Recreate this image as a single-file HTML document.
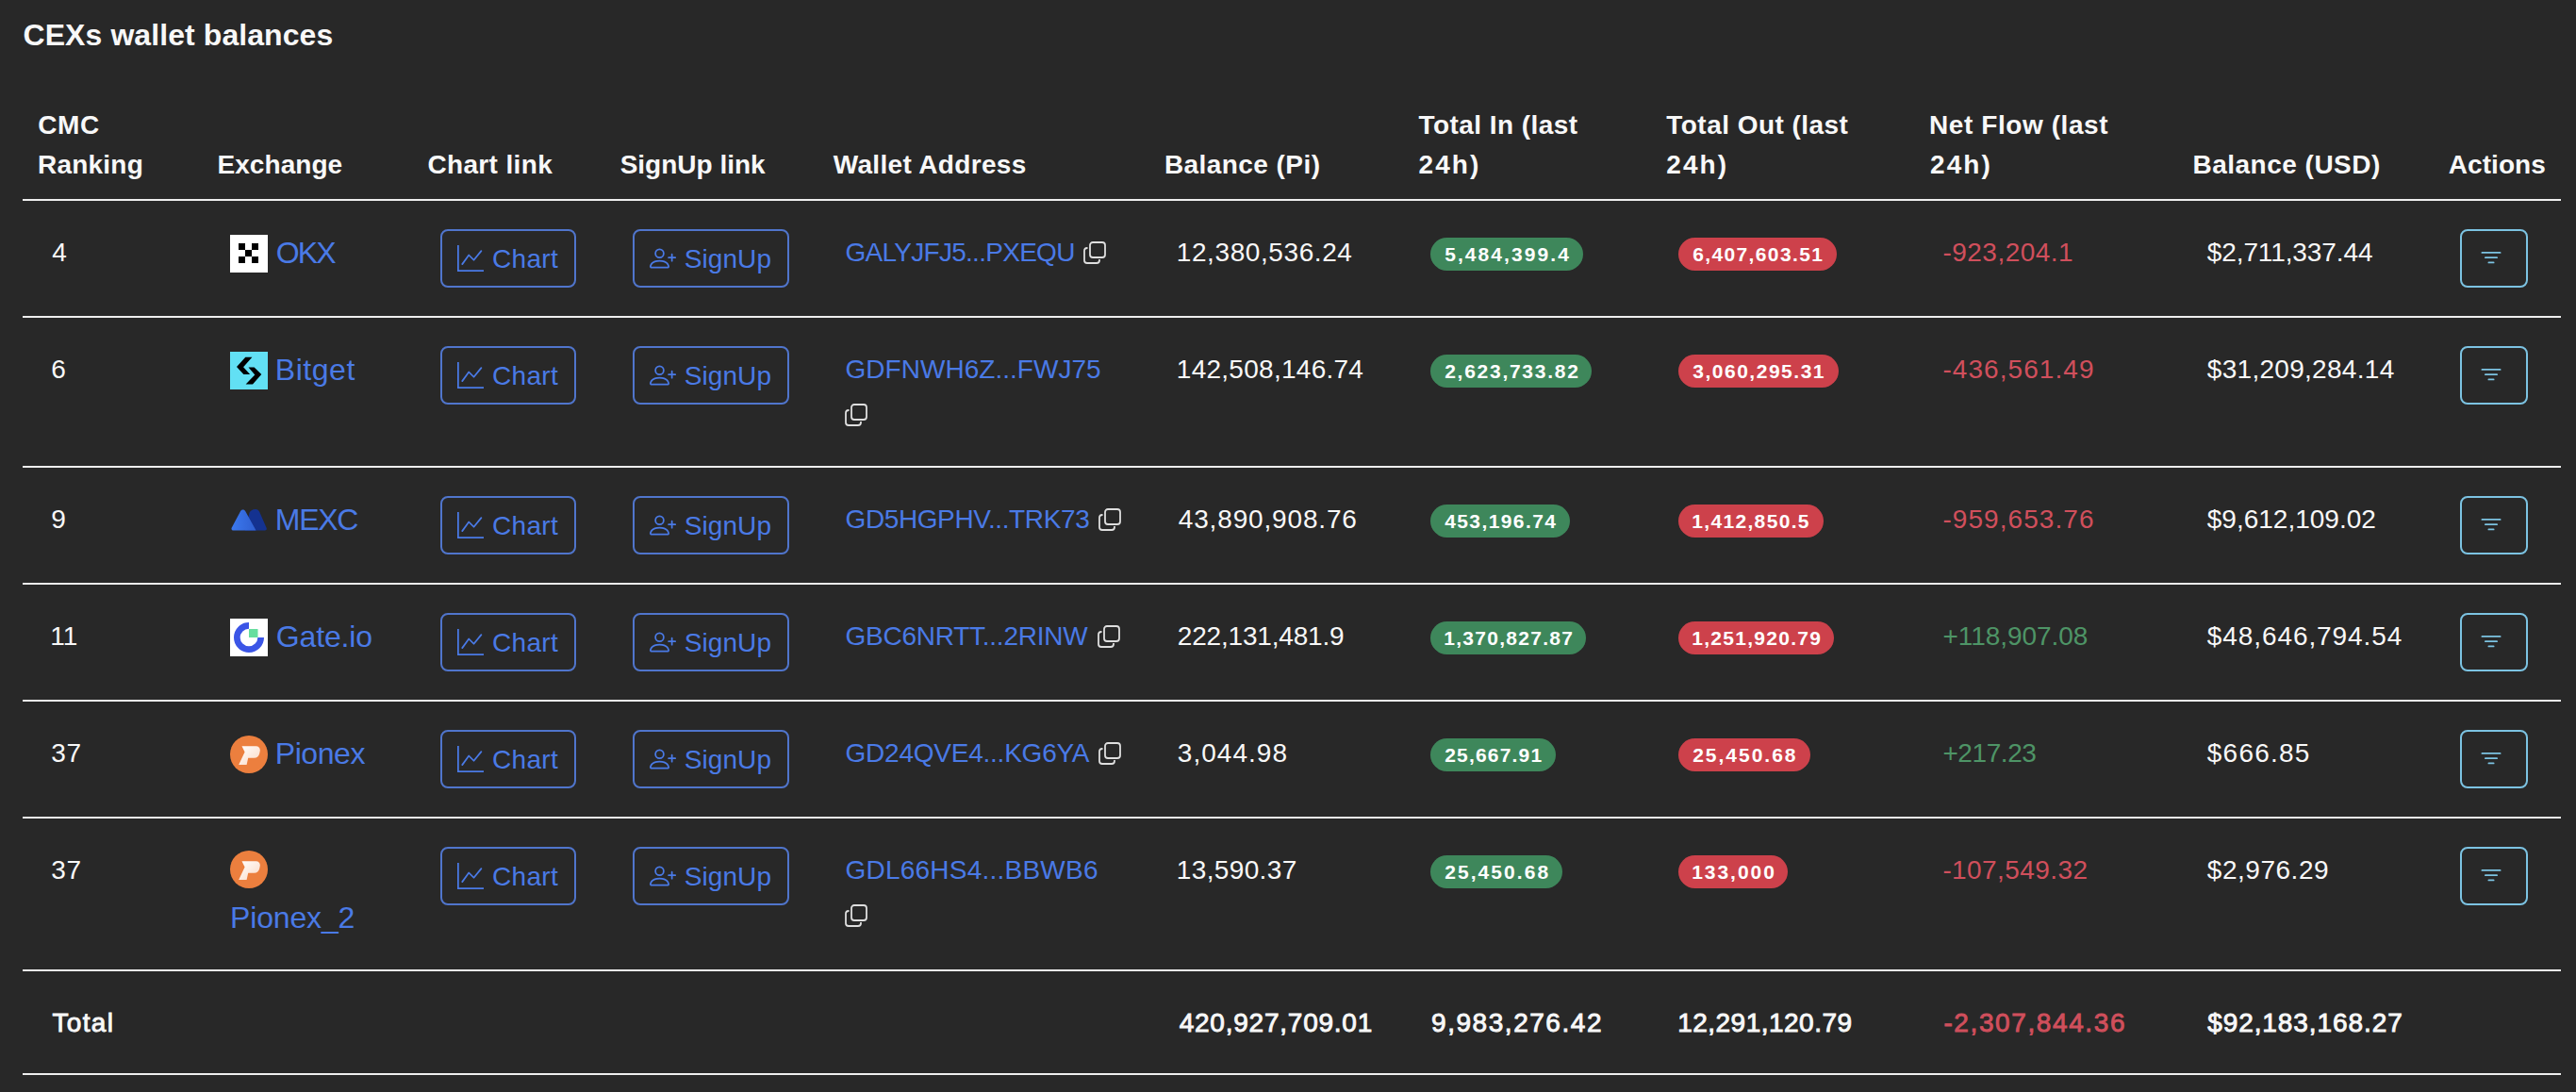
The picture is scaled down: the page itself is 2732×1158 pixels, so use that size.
<!DOCTYPE html>
<html><head><meta charset="utf-8"><title>CEXs wallet balances</title>
<style>
html,body{margin:0;padding:0;background:#282828;width:2732px;height:1158px;overflow:hidden}
body{position:relative;font-family:"Liberation Sans",sans-serif}
.t{position:absolute;white-space:nowrap;z-index:2}
.ab,.ic{position:absolute;line-height:0}
.ic{z-index:3}
.ln{position:absolute;left:24px;width:2692px;height:2px;background:#eeeeee}
.btn{position:absolute;height:62px;border:2px solid #5075cc;border-radius:8px;box-sizing:border-box}
.btn.info{border-color:#7cc3e2}
.bdg{position:absolute;height:35px;border-radius:17.5px;z-index:1}
</style></head><body>
<div class="ln" style="top:211px"></div>
<div class="ln" style="top:335px"></div>
<div class="ln" style="top:494px"></div>
<div class="ln" style="top:618px"></div>
<div class="ln" style="top:742px"></div>
<div class="ln" style="top:866px"></div>
<div class="ln" style="top:1028px"></div>
<div class="ln" style="top:1138px"></div>
<div class="t" style="left:24.5px;top:21px;font-size:32px;line-height:32px;color:#f8f8f8;font-weight:700;letter-spacing:0.08px">CEXs wallet balances</div>
<div class="t" style="left:40.2px;top:119px;font-size:28px;line-height:28px;color:#f8f8f8;font-weight:700;letter-spacing:0.63px">CMC</div>
<div class="t" style="left:40px;top:161px;font-size:28px;line-height:28px;color:#f8f8f8;font-weight:700;letter-spacing:0.22px">Ranking</div>
<div class="t" style="left:230.5px;top:161px;font-size:28px;line-height:28px;color:#f8f8f8;font-weight:700;letter-spacing:0.06px">Exchange</div>
<div class="t" style="left:453.4px;top:161px;font-size:28px;line-height:28px;color:#f8f8f8;font-weight:700;letter-spacing:0.36px">Chart link</div>
<div class="t" style="left:657.7px;top:161px;font-size:28px;line-height:28px;color:#f8f8f8;font-weight:700;letter-spacing:-0.01px">SignUp link</div>
<div class="t" style="left:883.7px;top:161px;font-size:28px;line-height:28px;color:#f8f8f8;font-weight:700;letter-spacing:0.34px">Wallet Address</div>
<div class="t" style="left:1234.9px;top:161px;font-size:28px;line-height:28px;color:#f8f8f8;font-weight:700;letter-spacing:0.44px">Balance (Pi)</div>
<div class="t" style="left:1504.5px;top:119px;font-size:28px;line-height:28px;color:#f8f8f8;font-weight:700;letter-spacing:0.45px">Total In (last</div>
<div class="t" style="left:1504.5px;top:161px;font-size:28px;line-height:28px;color:#f8f8f8;font-weight:700;letter-spacing:2.08px">24h)</div>
<div class="t" style="left:1767.3px;top:119px;font-size:28px;line-height:28px;color:#f8f8f8;font-weight:700;letter-spacing:0.46px">Total Out (last</div>
<div class="t" style="left:1767.3px;top:161px;font-size:28px;line-height:28px;color:#f8f8f8;font-weight:700;letter-spacing:2.08px">24h)</div>
<div class="t" style="left:2046px;top:119px;font-size:28px;line-height:28px;color:#f8f8f8;font-weight:700;letter-spacing:0.58px">Net Flow (last</div>
<div class="t" style="left:2047px;top:161px;font-size:28px;line-height:28px;color:#f8f8f8;font-weight:700;letter-spacing:2.08px">24h)</div>
<div class="t" style="left:2325.5px;top:161px;font-size:28px;line-height:28px;color:#f8f8f8;font-weight:700;letter-spacing:0.49px">Balance (USD)</div>
<div class="t" style="left:2596.7px;top:161px;font-size:28px;line-height:28px;color:#f8f8f8;font-weight:700;letter-spacing:0.08px">Actions</div>
<div class="t" style="left:55.3px;top:254px;font-size:28px;line-height:28px;color:#f8f8f8">4</div>
<div class="t" style="left:292.8px;top:251.7px;font-size:32px;line-height:32px;color:#4a7ae6;letter-spacing:-1.87px">OKX</div>
<div class="t" style="left:522px;top:260.8px;font-size:28px;line-height:28px;color:#4a7ae6;letter-spacing:0.33px">Chart</div>
<div class="t" style="left:725.7px;top:260.8px;font-size:28px;line-height:28px;color:#4a7ae6;letter-spacing:0.09px">SignUp</div>
<div class="t" style="left:896.5px;top:253.5px;font-size:28px;line-height:28px;color:#4a7ae6;letter-spacing:-0.72px">GALYJFJ5...PXEQU</div>
<div class="t" style="left:1247.8px;top:254px;font-size:28px;line-height:28px;color:#f8f8f8;letter-spacing:0.59px">12,380,536.24</div>
<div class="t" style="left:1532.2px;top:259.3px;font-size:21px;line-height:21px;color:#ffffff;font-weight:700;letter-spacing:2.07px">5,484,399.4</div>
<div class="t" style="left:1795.2px;top:259.3px;font-size:21px;line-height:21px;color:#ffffff;font-weight:700;letter-spacing:1.37px">6,407,603.51</div>
<div class="t" style="left:2060.4px;top:254.3px;font-size:28px;line-height:28px;color:#d04f5c;letter-spacing:0.49px">-923,204.1</div>
<div class="t" style="left:2340.8px;top:254.3px;font-size:28px;line-height:28px;color:#f8f8f8;letter-spacing:-0.11px">$2,711,337.44</div>
<div class="t" style="left:54.3px;top:378px;font-size:28px;line-height:28px;color:#f8f8f8">6</div>
<div class="t" style="left:291.8px;top:375.7px;font-size:32px;line-height:32px;color:#4a7ae6;letter-spacing:0.53px">Bitget</div>
<div class="t" style="left:522px;top:384.8px;font-size:28px;line-height:28px;color:#4a7ae6;letter-spacing:0.33px">Chart</div>
<div class="t" style="left:725.7px;top:384.8px;font-size:28px;line-height:28px;color:#4a7ae6;letter-spacing:0.09px">SignUp</div>
<div class="t" style="left:896.5px;top:377.5px;font-size:28px;line-height:28px;color:#4a7ae6;letter-spacing:0.03px">GDFNWH6Z...FWJ75</div>
<div class="t" style="left:1247.8px;top:378px;font-size:28px;line-height:28px;color:#f8f8f8;letter-spacing:0.27px">142,508,146.74</div>
<div class="t" style="left:1532.2px;top:383.3px;font-size:21px;line-height:21px;color:#ffffff;font-weight:700;letter-spacing:1.73px">2,623,733.82</div>
<div class="t" style="left:1795.2px;top:383.3px;font-size:21px;line-height:21px;color:#ffffff;font-weight:700;letter-spacing:1.52px">3,060,295.31</div>
<div class="t" style="left:2060.4px;top:378.3px;font-size:28px;line-height:28px;color:#d04f5c;letter-spacing:1.06px">-436,561.49</div>
<div class="t" style="left:2340.8px;top:378.3px;font-size:28px;line-height:28px;color:#f8f8f8;letter-spacing:0.29px">$31,209,284.14</div>
<div class="t" style="left:54.3px;top:537px;font-size:28px;line-height:28px;color:#f8f8f8">9</div>
<div class="t" style="left:291.8px;top:534.7px;font-size:32px;line-height:32px;color:#4a7ae6;letter-spacing:-1.28px">MEXC</div>
<div class="t" style="left:522px;top:543.8px;font-size:28px;line-height:28px;color:#4a7ae6;letter-spacing:0.33px">Chart</div>
<div class="t" style="left:725.7px;top:543.8px;font-size:28px;line-height:28px;color:#4a7ae6;letter-spacing:0.09px">SignUp</div>
<div class="t" style="left:896.5px;top:536.5px;font-size:28px;line-height:28px;color:#4a7ae6;letter-spacing:-0.39px">GD5HGPHV...TRK73</div>
<div class="t" style="left:1249.8px;top:537px;font-size:28px;line-height:28px;color:#f8f8f8;letter-spacing:0.84px">43,890,908.76</div>
<div class="t" style="left:1532.2px;top:542.3px;font-size:21px;line-height:21px;color:#ffffff;font-weight:700;letter-spacing:1.4px">453,196.74</div>
<div class="t" style="left:1794.2px;top:542.3px;font-size:21px;line-height:21px;color:#ffffff;font-weight:700;letter-spacing:1.34px">1,412,850.5</div>
<div class="t" style="left:2060.4px;top:537.3px;font-size:28px;line-height:28px;color:#d04f5c;letter-spacing:1.06px">-959,653.76</div>
<div class="t" style="left:2340.8px;top:537.3px;font-size:28px;line-height:28px;color:#f8f8f8">$9,612,109.02</div>
<div class="t" style="left:53.3px;top:661px;font-size:28px;line-height:28px;color:#f8f8f8">11</div>
<div class="t" style="left:292.8px;top:658.7px;font-size:32px;line-height:32px;color:#4a7ae6;letter-spacing:-0.15px">Gate.io</div>
<div class="t" style="left:522px;top:667.8px;font-size:28px;line-height:28px;color:#4a7ae6;letter-spacing:0.33px">Chart</div>
<div class="t" style="left:725.7px;top:667.8px;font-size:28px;line-height:28px;color:#4a7ae6;letter-spacing:0.09px">SignUp</div>
<div class="t" style="left:896.5px;top:660.5px;font-size:28px;line-height:28px;color:#4a7ae6;letter-spacing:-0.25px">GBC6NRTT...2RINW</div>
<div class="t" style="left:1248.8px;top:661px;font-size:28px;line-height:28px;color:#f8f8f8;letter-spacing:-0.19px">222,131,481.9</div>
<div class="t" style="left:1531.2px;top:666.3px;font-size:21px;line-height:21px;color:#ffffff;font-weight:700;letter-spacing:1.28px">1,370,827.87</div>
<div class="t" style="left:1794.2px;top:666.3px;font-size:21px;line-height:21px;color:#ffffff;font-weight:700;letter-spacing:1.28px">1,251,920.79</div>
<div class="t" style="left:2060.4px;top:661.3px;font-size:28px;line-height:28px;color:#4e9466;letter-spacing:-0.04px">+118,907.08</div>
<div class="t" style="left:2340.8px;top:661.3px;font-size:28px;line-height:28px;color:#f8f8f8;letter-spacing:0.91px">$48,646,794.54</div>
<div class="t" style="left:54.3px;top:785px;font-size:28px;line-height:28px;color:#f8f8f8;letter-spacing:0.63px">37</div>
<div class="t" style="left:291.8px;top:782.7px;font-size:32px;line-height:32px;color:#4a7ae6;letter-spacing:-0.45px">Pionex</div>
<div class="t" style="left:522px;top:791.8px;font-size:28px;line-height:28px;color:#4a7ae6;letter-spacing:0.33px">Chart</div>
<div class="t" style="left:725.7px;top:791.8px;font-size:28px;line-height:28px;color:#4a7ae6;letter-spacing:0.09px">SignUp</div>
<div class="t" style="left:896.5px;top:784.5px;font-size:28px;line-height:28px;color:#4a7ae6;letter-spacing:-0.23px">GD24QVE4...KG6YA</div>
<div class="t" style="left:1248.8px;top:785px;font-size:28px;line-height:28px;color:#f8f8f8;letter-spacing:1.03px">3,044.98</div>
<div class="t" style="left:1532.2px;top:790.3px;font-size:21px;line-height:21px;color:#ffffff;font-weight:700;letter-spacing:1.19px">25,667.91</div>
<div class="t" style="left:1795.2px;top:790.3px;font-size:21px;line-height:21px;color:#ffffff;font-weight:700;letter-spacing:1.99px">25,450.68</div>
<div class="t" style="left:2060.4px;top:785.3px;font-size:28px;line-height:28px;color:#4e9466;letter-spacing:-0.42px">+217.23</div>
<div class="t" style="left:2340.8px;top:785.3px;font-size:28px;line-height:28px;color:#f8f8f8;letter-spacing:1.23px">$666.85</div>
<div class="t" style="left:54.3px;top:909px;font-size:28px;line-height:28px;color:#f8f8f8;letter-spacing:0.63px">37</div>
<div class="t" style="left:244px;top:957.2px;font-size:32px;line-height:32px;color:#4a7ae6;letter-spacing:-0.16px">Pionex_2</div>
<div class="t" style="left:522px;top:915.8px;font-size:28px;line-height:28px;color:#4a7ae6;letter-spacing:0.33px">Chart</div>
<div class="t" style="left:725.7px;top:915.8px;font-size:28px;line-height:28px;color:#4a7ae6;letter-spacing:0.09px">SignUp</div>
<div class="t" style="left:896.5px;top:908.5px;font-size:28px;line-height:28px;color:#4a7ae6;letter-spacing:0.23px">GDL66HS4...BBWB6</div>
<div class="t" style="left:1247.8px;top:909px;font-size:28px;line-height:28px;color:#f8f8f8;letter-spacing:0.36px">13,590.37</div>
<div class="t" style="left:1532.2px;top:914.3px;font-size:21px;line-height:21px;color:#ffffff;font-weight:700;letter-spacing:2.07px">25,450.68</div>
<div class="t" style="left:1794.2px;top:914.3px;font-size:21px;line-height:21px;color:#ffffff;font-weight:700;letter-spacing:1.96px">133,000</div>
<div class="t" style="left:2060.4px;top:909.3px;font-size:28px;line-height:28px;color:#d04f5c;letter-spacing:0.41px">-107,549.32</div>
<div class="t" style="left:2340.8px;top:909.3px;font-size:28px;line-height:28px;color:#f8f8f8;letter-spacing:0.53px">$2,976.29</div>
<div class="t" style="left:55.55px;top:1071.3px;font-size:28px;line-height:28px;color:#f8f8f8;-webkit-text-stroke:0.9px #f8f8f8;letter-spacing:1.32px">Total</div>
<div class="t" style="left:1250.65px;top:1071.2px;font-size:28px;line-height:28px;color:#f8f8f8;-webkit-text-stroke:0.9px #f8f8f8;letter-spacing:0.77px">420,927,709.01</div>
<div class="t" style="left:1518.05px;top:1071.2px;font-size:28px;line-height:28px;color:#f8f8f8;-webkit-text-stroke:0.9px #f8f8f8;letter-spacing:1.54px">9,983,276.42</div>
<div class="t" style="left:1779.15px;top:1071.2px;font-size:28px;line-height:28px;color:#f8f8f8;-webkit-text-stroke:0.9px #f8f8f8;letter-spacing:0.49px">12,291,120.79</div>
<div class="t" style="left:2061.45px;top:1071.2px;font-size:28px;line-height:28px;color:#d04f5c;-webkit-text-stroke:0.9px #d04f5c;letter-spacing:1.6px">-2,307,844.36</div>
<div class="t" style="left:2341.15px;top:1071.2px;font-size:28px;line-height:28px;color:#f8f8f8;-webkit-text-stroke:0.9px #f8f8f8;letter-spacing:0.93px">$92,183,168.27</div>
<div class="ab" style="left:244px;top:249px;width:40px;height:40px"><svg width="40" height="40" viewBox="0 0 40 40"><rect width="40" height="40" fill="#fff"/><g fill="#000"><rect x="9" y="9" width="7" height="7"/><rect x="23" y="9" width="7" height="7"/><rect x="16" y="16" width="7" height="7"/><rect x="9" y="23" width="7" height="7"/><rect x="23" y="23" width="7" height="7"/></g></svg></div>
<div class="btn" style="left:467px;top:243px;width:144px"></div>
<div class="ic" style="left:485px;top:260px;color:#4a7ae6"><svg viewBox="0 0 16 16" width="28" height="28" fill="currentColor"><path fill-rule="evenodd" d="M0 0h1v15h15v1H0zm14.817 3.113a.5.5 0 0 1 .07.704l-4.5 5.5a.5.5 0 0 1-.74.037L7.06 6.767l-3.656 5.027a.5.5 0 0 1-.808-.588l4-5.5a.5.5 0 0 1 .758-.06l2.609 2.61 4.15-5.073a.5.5 0 0 1 .704-.07"/></svg></div>
<div class="btn" style="left:671px;top:243px;width:166px"></div>
<div class="ic" style="left:689px;top:260px;color:#4a7ae6"><svg viewBox="0 0 16 16" width="28" height="28" fill="currentColor"><path d="M6 8a3 3 0 1 0 0-6 3 3 0 0 0 0 6m2-3a2 2 0 1 1-4 0 2 2 0 0 1 4 0m4 8c0 1-1 1-1 1H1s-1 0-1-1 1-4 6-4 6 3 6 4m-1-.004c-.001-.246-.154-.986-.832-1.664C9.516 10.68 8.289 10 6 10s-3.516.68-4.168 1.332c-.678.678-.83 1.418-.832 1.664z"/><path fill-rule="evenodd" d="M13.5 5a.5.5 0 0 1 .5.5V7h1.5a.5.5 0 0 1 0 1H14v1.5a.5.5 0 0 1-1 0V8h-1.5a.5.5 0 0 1 0-1H13V5.5a.5.5 0 0 1 .5-.5"/></svg></div>
<div class="btn info" style="left:2609px;top:243px;width:72px"></div>
<div class="ic" style="left:2627.5px;top:260px;color:#7cc3e2"><svg viewBox="0 0 16 16" width="28" height="28" fill="currentColor"><path d="M6 10.5a.5.5 0 0 1 .5-.5h3a.5.5 0 0 1 0 1h-3a.5.5 0 0 1-.5-.5m-2-3a.5.5 0 0 1 .5-.5h7a.5.5 0 0 1 0 1h-7a.5.5 0 0 1-.5-.5m-2-3a.5.5 0 0 1 .5-.5h11a.5.5 0 0 1 0 1h-11a.5.5 0 0 1-.5-.5"/></svg></div>
<div class="ic" style="left:1148.6px;top:256px;color:#dedede"><svg viewBox="0 0 24 24" width="24" height="24" fill="none" stroke="currentColor" stroke-width="1.8"><rect x="7" y="1" width="16" height="16" rx="3"/><path d="M4.5 7H4a3 3 0 0 0-3 3v10a3 3 0 0 0 3 3h10a3 3 0 0 0 3-3v-1"/></svg></div>
<div class="bdg" style="left:1517px;top:252px;width:162px;background:#3e875b"></div>
<div class="bdg" style="left:1780px;top:252px;width:168px;background:#cd414b"></div>
<div class="ab" style="left:244px;top:373px;width:40px;height:40px"><svg width="40" height="40" viewBox="0 0 40 40"><rect width="40" height="40" fill="#62e0f4"/><g fill="#000"><path d="M16.3 5.8H23.4L14.1 16.3L21.1 24.1H14.4L7 16.1Z"/><path d="M19.5 16.4H25.6L33.3 24.1L24 34.6H16.6L26.3 24.4Z"/></g></svg></div>
<div class="btn" style="left:467px;top:367px;width:144px"></div>
<div class="ic" style="left:485px;top:384px;color:#4a7ae6"><svg viewBox="0 0 16 16" width="28" height="28" fill="currentColor"><path fill-rule="evenodd" d="M0 0h1v15h15v1H0zm14.817 3.113a.5.5 0 0 1 .07.704l-4.5 5.5a.5.5 0 0 1-.74.037L7.06 6.767l-3.656 5.027a.5.5 0 0 1-.808-.588l4-5.5a.5.5 0 0 1 .758-.06l2.609 2.61 4.15-5.073a.5.5 0 0 1 .704-.07"/></svg></div>
<div class="btn" style="left:671px;top:367px;width:166px"></div>
<div class="ic" style="left:689px;top:384px;color:#4a7ae6"><svg viewBox="0 0 16 16" width="28" height="28" fill="currentColor"><path d="M6 8a3 3 0 1 0 0-6 3 3 0 0 0 0 6m2-3a2 2 0 1 1-4 0 2 2 0 0 1 4 0m4 8c0 1-1 1-1 1H1s-1 0-1-1 1-4 6-4 6 3 6 4m-1-.004c-.001-.246-.154-.986-.832-1.664C9.516 10.68 8.289 10 6 10s-3.516.68-4.168 1.332c-.678.678-.83 1.418-.832 1.664z"/><path fill-rule="evenodd" d="M13.5 5a.5.5 0 0 1 .5.5V7h1.5a.5.5 0 0 1 0 1H14v1.5a.5.5 0 0 1-1 0V8h-1.5a.5.5 0 0 1 0-1H13V5.5a.5.5 0 0 1 .5-.5"/></svg></div>
<div class="btn info" style="left:2609px;top:367px;width:72px"></div>
<div class="ic" style="left:2627.5px;top:384px;color:#7cc3e2"><svg viewBox="0 0 16 16" width="28" height="28" fill="currentColor"><path d="M6 10.5a.5.5 0 0 1 .5-.5h3a.5.5 0 0 1 0 1h-3a.5.5 0 0 1-.5-.5m-2-3a.5.5 0 0 1 .5-.5h7a.5.5 0 0 1 0 1h-7a.5.5 0 0 1-.5-.5m-2-3a.5.5 0 0 1 .5-.5h11a.5.5 0 0 1 0 1h-11a.5.5 0 0 1-.5-.5"/></svg></div>
<div class="ic" style="left:896.3px;top:428px;color:#dedede"><svg viewBox="0 0 24 24" width="24" height="24" fill="none" stroke="currentColor" stroke-width="1.8"><rect x="7" y="1" width="16" height="16" rx="3"/><path d="M4.5 7H4a3 3 0 0 0-3 3v10a3 3 0 0 0 3 3h10a3 3 0 0 0 3-3v-1"/></svg></div>
<div class="bdg" style="left:1517px;top:376px;width:171px;background:#3e875b"></div>
<div class="bdg" style="left:1780px;top:376px;width:169.7px;background:#cd414b"></div>
<div class="ab" style="left:244px;top:532px;width:40px;height:40px"><svg width="40" height="40" viewBox="0 0 40 40"><defs><linearGradient id="mg" x1="0" y1="0" x2="1" y2="0"><stop offset="0" stop-color="#3b78ee"/><stop offset="1" stop-color="#2f5fd0"/></linearGradient></defs><path d="M16 30.6L20.6 11.6C21.8 9.3 24 8 27 8C29 8 30.4 9.3 31.3 11L38.6 27.8C39.3 29.4 38.5 30.6 36.8 30.6Z" fill="#143290"/><path d="M13.6 8.5C12.6 8.5 11.6 9 11 10.2L1.8 27.6C1 29.2 1.8 30.6 3.6 30.6H27.5L16.3 10.2C15.7 9 14.7 8.5 13.6 8.5Z" fill="url(#mg)"/></svg></div>
<div class="btn" style="left:467px;top:526px;width:144px"></div>
<div class="ic" style="left:485px;top:543px;color:#4a7ae6"><svg viewBox="0 0 16 16" width="28" height="28" fill="currentColor"><path fill-rule="evenodd" d="M0 0h1v15h15v1H0zm14.817 3.113a.5.5 0 0 1 .07.704l-4.5 5.5a.5.5 0 0 1-.74.037L7.06 6.767l-3.656 5.027a.5.5 0 0 1-.808-.588l4-5.5a.5.5 0 0 1 .758-.06l2.609 2.61 4.15-5.073a.5.5 0 0 1 .704-.07"/></svg></div>
<div class="btn" style="left:671px;top:526px;width:166px"></div>
<div class="ic" style="left:689px;top:543px;color:#4a7ae6"><svg viewBox="0 0 16 16" width="28" height="28" fill="currentColor"><path d="M6 8a3 3 0 1 0 0-6 3 3 0 0 0 0 6m2-3a2 2 0 1 1-4 0 2 2 0 0 1 4 0m4 8c0 1-1 1-1 1H1s-1 0-1-1 1-4 6-4 6 3 6 4m-1-.004c-.001-.246-.154-.986-.832-1.664C9.516 10.68 8.289 10 6 10s-3.516.68-4.168 1.332c-.678.678-.83 1.418-.832 1.664z"/><path fill-rule="evenodd" d="M13.5 5a.5.5 0 0 1 .5.5V7h1.5a.5.5 0 0 1 0 1H14v1.5a.5.5 0 0 1-1 0V8h-1.5a.5.5 0 0 1 0-1H13V5.5a.5.5 0 0 1 .5-.5"/></svg></div>
<div class="btn info" style="left:2609px;top:526px;width:72px"></div>
<div class="ic" style="left:2627.5px;top:543px;color:#7cc3e2"><svg viewBox="0 0 16 16" width="28" height="28" fill="currentColor"><path d="M6 10.5a.5.5 0 0 1 .5-.5h3a.5.5 0 0 1 0 1h-3a.5.5 0 0 1-.5-.5m-2-3a.5.5 0 0 1 .5-.5h7a.5.5 0 0 1 0 1h-7a.5.5 0 0 1-.5-.5m-2-3a.5.5 0 0 1 .5-.5h11a.5.5 0 0 1 0 1h-11a.5.5 0 0 1-.5-.5"/></svg></div>
<div class="ic" style="left:1164.6px;top:539px;color:#dedede"><svg viewBox="0 0 24 24" width="24" height="24" fill="none" stroke="currentColor" stroke-width="1.8"><rect x="7" y="1" width="16" height="16" rx="3"/><path d="M4.5 7H4a3 3 0 0 0-3 3v10a3 3 0 0 0 3 3h10a3 3 0 0 0 3-3v-1"/></svg></div>
<div class="bdg" style="left:1517px;top:535px;width:148px;background:#3e875b"></div>
<div class="bdg" style="left:1780px;top:535px;width:153.7px;background:#cd414b"></div>
<div class="ab" style="left:244px;top:656px;width:40px;height:40px"><svg width="40" height="40" viewBox="0 0 40 40"><rect width="40" height="40" fill="#fff"/><path d="M20 4A16 16 0 1 0 36 20H29.3A9.3 9.3 0 1 1 20 10.7Z" fill="#3b55e6"/><rect x="20" y="11" width="9.5" height="9" fill="#67de9f"/></svg></div>
<div class="btn" style="left:467px;top:650px;width:144px"></div>
<div class="ic" style="left:485px;top:667px;color:#4a7ae6"><svg viewBox="0 0 16 16" width="28" height="28" fill="currentColor"><path fill-rule="evenodd" d="M0 0h1v15h15v1H0zm14.817 3.113a.5.5 0 0 1 .07.704l-4.5 5.5a.5.5 0 0 1-.74.037L7.06 6.767l-3.656 5.027a.5.5 0 0 1-.808-.588l4-5.5a.5.5 0 0 1 .758-.06l2.609 2.61 4.15-5.073a.5.5 0 0 1 .704-.07"/></svg></div>
<div class="btn" style="left:671px;top:650px;width:166px"></div>
<div class="ic" style="left:689px;top:667px;color:#4a7ae6"><svg viewBox="0 0 16 16" width="28" height="28" fill="currentColor"><path d="M6 8a3 3 0 1 0 0-6 3 3 0 0 0 0 6m2-3a2 2 0 1 1-4 0 2 2 0 0 1 4 0m4 8c0 1-1 1-1 1H1s-1 0-1-1 1-4 6-4 6 3 6 4m-1-.004c-.001-.246-.154-.986-.832-1.664C9.516 10.68 8.289 10 6 10s-3.516.68-4.168 1.332c-.678.678-.83 1.418-.832 1.664z"/><path fill-rule="evenodd" d="M13.5 5a.5.5 0 0 1 .5.5V7h1.5a.5.5 0 0 1 0 1H14v1.5a.5.5 0 0 1-1 0V8h-1.5a.5.5 0 0 1 0-1H13V5.5a.5.5 0 0 1 .5-.5"/></svg></div>
<div class="btn info" style="left:2609px;top:650px;width:72px"></div>
<div class="ic" style="left:2627.5px;top:667px;color:#7cc3e2"><svg viewBox="0 0 16 16" width="28" height="28" fill="currentColor"><path d="M6 10.5a.5.5 0 0 1 .5-.5h3a.5.5 0 0 1 0 1h-3a.5.5 0 0 1-.5-.5m-2-3a.5.5 0 0 1 .5-.5h7a.5.5 0 0 1 0 1h-7a.5.5 0 0 1-.5-.5m-2-3a.5.5 0 0 1 .5-.5h11a.5.5 0 0 1 0 1h-11a.5.5 0 0 1-.5-.5"/></svg></div>
<div class="ic" style="left:1163.6px;top:663px;color:#dedede"><svg viewBox="0 0 24 24" width="24" height="24" fill="none" stroke="currentColor" stroke-width="1.8"><rect x="7" y="1" width="16" height="16" rx="3"/><path d="M4.5 7H4a3 3 0 0 0-3 3v10a3 3 0 0 0 3 3h10a3 3 0 0 0 3-3v-1"/></svg></div>
<div class="bdg" style="left:1517px;top:659px;width:165px;background:#3e875b"></div>
<div class="bdg" style="left:1780px;top:659px;width:165px;background:#cd414b"></div>
<div class="ab" style="left:244px;top:780px;width:40px;height:40px"><svg width="40" height="40" viewBox="0 0 40 40"><defs><linearGradient id="pg" x1="0" y1="0" x2="1" y2="1"><stop offset="0" stop-color="#ffffff"/><stop offset="1" stop-color="#fbd9c4"/></linearGradient></defs><circle cx="20" cy="20" r="20" fill="#ec7f3e"/><path d="M12.5 11.3H27.5C30.6 11.3 32.3 13.6 31.7 16.6L31.2 19C30.6 21.9 28.5 23.8 25.6 23.8H19.2L17.6 31H9.2L15.6 17.4Z" fill="url(#pg)"/></svg></div>
<div class="btn" style="left:467px;top:774px;width:144px"></div>
<div class="ic" style="left:485px;top:791px;color:#4a7ae6"><svg viewBox="0 0 16 16" width="28" height="28" fill="currentColor"><path fill-rule="evenodd" d="M0 0h1v15h15v1H0zm14.817 3.113a.5.5 0 0 1 .07.704l-4.5 5.5a.5.5 0 0 1-.74.037L7.06 6.767l-3.656 5.027a.5.5 0 0 1-.808-.588l4-5.5a.5.5 0 0 1 .758-.06l2.609 2.61 4.15-5.073a.5.5 0 0 1 .704-.07"/></svg></div>
<div class="btn" style="left:671px;top:774px;width:166px"></div>
<div class="ic" style="left:689px;top:791px;color:#4a7ae6"><svg viewBox="0 0 16 16" width="28" height="28" fill="currentColor"><path d="M6 8a3 3 0 1 0 0-6 3 3 0 0 0 0 6m2-3a2 2 0 1 1-4 0 2 2 0 0 1 4 0m4 8c0 1-1 1-1 1H1s-1 0-1-1 1-4 6-4 6 3 6 4m-1-.004c-.001-.246-.154-.986-.832-1.664C9.516 10.68 8.289 10 6 10s-3.516.68-4.168 1.332c-.678.678-.83 1.418-.832 1.664z"/><path fill-rule="evenodd" d="M13.5 5a.5.5 0 0 1 .5.5V7h1.5a.5.5 0 0 1 0 1H14v1.5a.5.5 0 0 1-1 0V8h-1.5a.5.5 0 0 1 0-1H13V5.5a.5.5 0 0 1 .5-.5"/></svg></div>
<div class="btn info" style="left:2609px;top:774px;width:72px"></div>
<div class="ic" style="left:2627.5px;top:791px;color:#7cc3e2"><svg viewBox="0 0 16 16" width="28" height="28" fill="currentColor"><path d="M6 10.5a.5.5 0 0 1 .5-.5h3a.5.5 0 0 1 0 1h-3a.5.5 0 0 1-.5-.5m-2-3a.5.5 0 0 1 .5-.5h7a.5.5 0 0 1 0 1h-7a.5.5 0 0 1-.5-.5m-2-3a.5.5 0 0 1 .5-.5h11a.5.5 0 0 1 0 1h-11a.5.5 0 0 1-.5-.5"/></svg></div>
<div class="ic" style="left:1165.4px;top:787px;color:#dedede"><svg viewBox="0 0 24 24" width="24" height="24" fill="none" stroke="currentColor" stroke-width="1.8"><rect x="7" y="1" width="16" height="16" rx="3"/><path d="M4.5 7H4a3 3 0 0 0-3 3v10a3 3 0 0 0 3 3h10a3 3 0 0 0 3-3v-1"/></svg></div>
<div class="bdg" style="left:1517px;top:783px;width:133.3px;background:#3e875b"></div>
<div class="bdg" style="left:1780px;top:783px;width:139.7px;background:#cd414b"></div>
<div class="ab" style="left:244px;top:902px;width:40px;height:40px"><svg width="40" height="40" viewBox="0 0 40 40"><defs><linearGradient id="pg" x1="0" y1="0" x2="1" y2="1"><stop offset="0" stop-color="#ffffff"/><stop offset="1" stop-color="#fbd9c4"/></linearGradient></defs><circle cx="20" cy="20" r="20" fill="#ec7f3e"/><path d="M12.5 11.3H27.5C30.6 11.3 32.3 13.6 31.7 16.6L31.2 19C30.6 21.9 28.5 23.8 25.6 23.8H19.2L17.6 31H9.2L15.6 17.4Z" fill="url(#pg)"/></svg></div>
<div class="btn" style="left:467px;top:898px;width:144px"></div>
<div class="ic" style="left:485px;top:915px;color:#4a7ae6"><svg viewBox="0 0 16 16" width="28" height="28" fill="currentColor"><path fill-rule="evenodd" d="M0 0h1v15h15v1H0zm14.817 3.113a.5.5 0 0 1 .07.704l-4.5 5.5a.5.5 0 0 1-.74.037L7.06 6.767l-3.656 5.027a.5.5 0 0 1-.808-.588l4-5.5a.5.5 0 0 1 .758-.06l2.609 2.61 4.15-5.073a.5.5 0 0 1 .704-.07"/></svg></div>
<div class="btn" style="left:671px;top:898px;width:166px"></div>
<div class="ic" style="left:689px;top:915px;color:#4a7ae6"><svg viewBox="0 0 16 16" width="28" height="28" fill="currentColor"><path d="M6 8a3 3 0 1 0 0-6 3 3 0 0 0 0 6m2-3a2 2 0 1 1-4 0 2 2 0 0 1 4 0m4 8c0 1-1 1-1 1H1s-1 0-1-1 1-4 6-4 6 3 6 4m-1-.004c-.001-.246-.154-.986-.832-1.664C9.516 10.68 8.289 10 6 10s-3.516.68-4.168 1.332c-.678.678-.83 1.418-.832 1.664z"/><path fill-rule="evenodd" d="M13.5 5a.5.5 0 0 1 .5.5V7h1.5a.5.5 0 0 1 0 1H14v1.5a.5.5 0 0 1-1 0V8h-1.5a.5.5 0 0 1 0-1H13V5.5a.5.5 0 0 1 .5-.5"/></svg></div>
<div class="btn info" style="left:2609px;top:898px;width:72px"></div>
<div class="ic" style="left:2627.5px;top:915px;color:#7cc3e2"><svg viewBox="0 0 16 16" width="28" height="28" fill="currentColor"><path d="M6 10.5a.5.5 0 0 1 .5-.5h3a.5.5 0 0 1 0 1h-3a.5.5 0 0 1-.5-.5m-2-3a.5.5 0 0 1 .5-.5h7a.5.5 0 0 1 0 1h-7a.5.5 0 0 1-.5-.5m-2-3a.5.5 0 0 1 .5-.5h11a.5.5 0 0 1 0 1h-11a.5.5 0 0 1-.5-.5"/></svg></div>
<div class="ic" style="left:896.3px;top:959px;color:#dedede"><svg viewBox="0 0 24 24" width="24" height="24" fill="none" stroke="currentColor" stroke-width="1.8"><rect x="7" y="1" width="16" height="16" rx="3"/><path d="M4.5 7H4a3 3 0 0 0-3 3v10a3 3 0 0 0 3 3h10a3 3 0 0 0 3-3v-1"/></svg></div>
<div class="bdg" style="left:1517px;top:907px;width:140.3px;background:#3e875b"></div>
<div class="bdg" style="left:1780px;top:907px;width:116px;background:#cd414b"></div>
</body></html>
